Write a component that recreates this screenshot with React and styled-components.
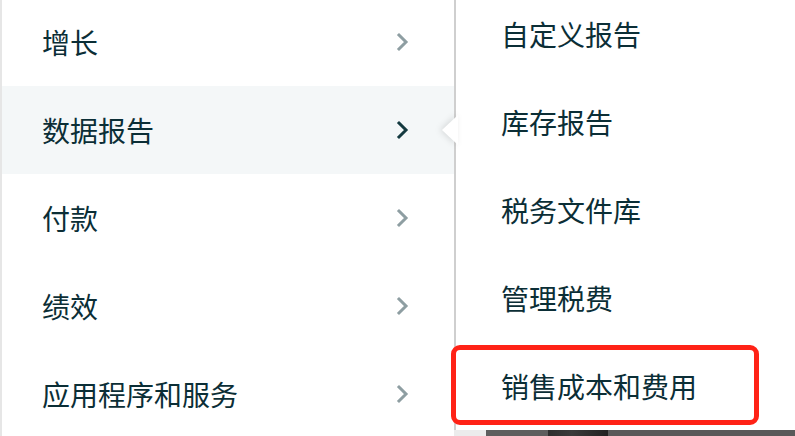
import React from "react";
import styled, { createGlobalStyle } from "styled-components";

const Global = createGlobalStyle`
  html, body { margin: 0; padding: 0; background: #fff; }
  body { width: 795px; height: 436px; overflow: hidden;
    font-family: "Noto Sans CJK SC", "Noto Sans", sans-serif; }
`;

const Frame = styled.div`
  display: flex;
  width: 795px;
  height: 436px;
  overflow: hidden;
  background: #fff;
`;

const LeftPanel = styled.div`
  width: 452px;
  border-left: 2px solid #e6e6e6;
  border-right: 2px solid #cfcfcf;
  flex-shrink: 0;
  display: flex;
  flex-direction: column;
  margin-top: -2px;
  height: 440px;
`;

const Row = styled.div`
  height: 88px;
  flex-shrink: 0;
  display: flex;
  align-items: center;
  justify-content: space-between;
  padding: 0 44px 0 40px;
  background: ${(p) => (p.$active ? "#f4f7f8" : "#fff")};
  font-size: 28px;
  color: #0b2e36;
`;

const Chevron = styled.svg`
  width: 14px;
  height: 22px;
  display: block;
`;

const RightCol = styled.div`
  flex: 1;
  display: flex;
  flex-direction: column;
  position: relative;
`;

const RightPanel = styled.div`
  display: flex;
  flex-direction: column;
  margin-top: -10px;
`;

const SubRow = styled.div`
  position: relative;
  height: 88px;
  flex-shrink: 0;
  display: flex;
  align-items: center;
  padding-left: 45px;
  font-size: 28px;
  color: #0b2e36;
`;

const Highlight = styled.div`
  position: absolute;
  left: -5px;
  top: 3px;
  width: 298px;
  height: 70px;
  border: 5px solid #ff2216;
  border-radius: 9px;
  pointer-events: none;
`;

const Caret = styled.svg`
  position: absolute;
  left: -16px;
  top: 113px;
  width: 18px;
  height: 34px;
  filter: drop-shadow(-2px 0 3px rgba(0, 0, 0, 0.12));
`;

const Strip = styled.div`
  display: flex;
  height: 6px;
  margin-left: -2px;
`;

const StripPart = styled.div`
  height: 100%;
  width: ${(p) => p.$w || "auto"};
  flex: ${(p) => (p.$grow ? 1 : "none")};
  background: ${(p) => p.$bg};
`;

const ChevronIcon = ({ active }) => (
  <Chevron viewBox="0 0 14 22">
    <path
      d="M3 4 L10 11 L3 18"
      fill="none"
      stroke={active ? "#143a40" : "#8e9ea2"}
      strokeWidth="3"
      strokeLinecap="square"
    />
  </Chevron>
);

const leftItems = ["增长", "数据报告", "付款", "绩效", "应用程序和服务"];
const rightItems = ["自定义报告", "库存报告", "税务文件库", "管理税费", "销售成本和费用"];

export default function App() {
  return (
    <>
      <Global />
      <Frame>
        <LeftPanel>
          {leftItems.map((t, i) => (
            <Row key={t} $active={i === 1}>
              <span>{t}</span>
              <ChevronIcon active={i === 1} />
            </Row>
          ))}
        </LeftPanel>
        <RightCol>
          <Caret viewBox="0 0 18 34">
            <path d="M18 2 L2 17 L18 32 Z" fill="#fff" />
          </Caret>
          <RightPanel>
            {rightItems.map((t, i) => (
              <SubRow key={t}>
                {t}
                {i === rightItems.length - 1 && <Highlight />}
              </SubRow>
            ))}
          </RightPanel>
          <Strip>
            <StripPart $w="32px" $bg="#ececec" />
            <StripPart $w="62px" $bg="#5e5e5e" />
            <StripPart $w="60px" $bg="linear-gradient(90deg,#2e2e2e,#3a3a3a 40%,#222)" />
            <StripPart $grow $bg="#595959" />
          </Strip>
        </RightCol>
      </Frame>
    </>
  );
}
